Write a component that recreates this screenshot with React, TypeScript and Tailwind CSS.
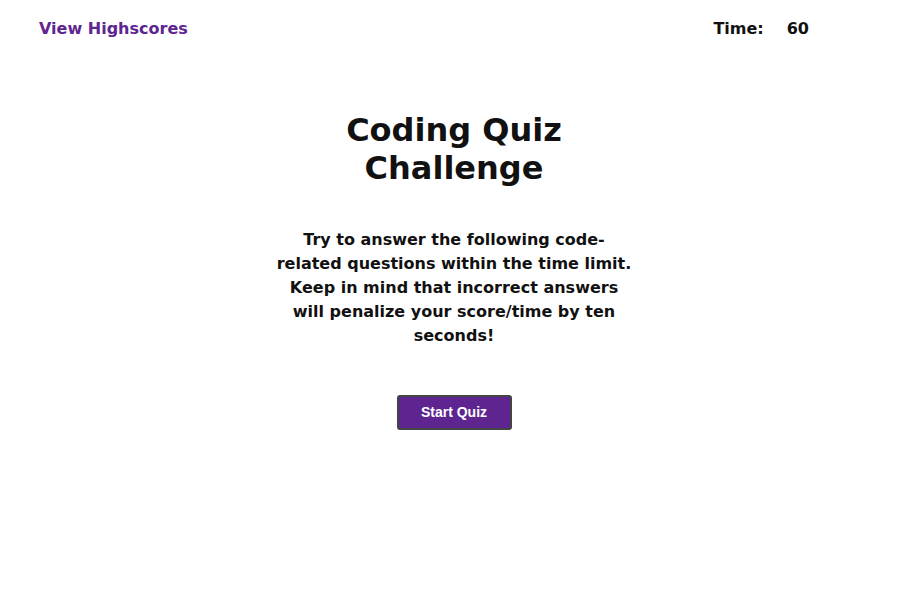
import React from 'react';

const App: React.FC = () => {
  return (
    <div className="min-h-screen bg-white font-['DejaVu_Sans',Verdana,sans-serif] text-[#111]">
      <header className="flex items-center justify-between pl-[39px] pr-[104px] pt-[17px]">
        <a href="#" className="text-[16px] font-bold text-[#5e2590]">View Highscores</a>
        <div className="flex gap-[23px] text-[16px] font-bold">
          <span>Time:</span>
          <span>60</span>
        </div>
      </header>

      <main className="flex flex-col items-center pt-[70px]">
        <div className="w-[360px] text-center ml-[-5px]">
          <h1 className="text-[32px] font-bold leading-[38px]">Coding Quiz Challenge</h1>
          <p className="mt-[41px] text-[16px] font-bold leading-[24px]">
            Try to answer the following code-related questions within the time limit. Keep in mind that incorrect answers will penalize your score/time by ten seconds!
          </p>
          <button className="mt-[47px] h-[35px] w-[115px] rounded-[3px] border-2 border-[#444] bg-[#5e2590] font-['Liberation_Sans',Arial,sans-serif] text-[14px] font-bold text-white">
            Start Quiz
          </button>
        </div>
      </main>
    </div>
  );
};

export default App;
